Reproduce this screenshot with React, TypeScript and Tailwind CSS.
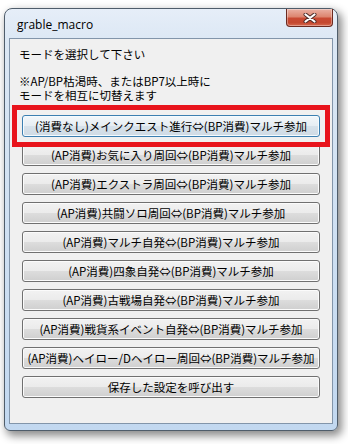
const modes = [
  "(AP消費)お気に入り周回⇔(BP消費)マルチ参加",
  "(AP消費)エクストラ周回⇔(BP消費)マルチ参加",
  "(AP消費)共闘ソロ周回⇔(BP消費)マルチ参加",
  "(AP消費)マルチ自発⇔(BP消費)マルチ参加",
  "(AP消費)四象自発⇔(BP消費)マルチ参加",
  "(AP消費)古戦場自発⇔(BP消費)マルチ参加",
  "(AP消費)戦貨系イベント自発⇔(BP消費)マルチ参加",
  "(AP消費)ヘイロー/Dヘイロー周回⇔(BP消費)マルチ参加",
  "保存した設定を呼び出す",
];

function CloseButton() {
  return (
    <button
      type="button"
      className="flex h-[18px] w-[47px] items-center justify-center rounded-b-[4px] border border-t-0 border-[#6b2a20] bg-[linear-gradient(to_bottom,#eab1a4_0%,#dd8670_45%,#c94a33_55%,#c4482f_80%,#d76a4f_100%)] shadow-[inset_0_0_0_1px_rgba(255,255,255,0.35)]"
    >
      <svg width="14" height="10" viewBox="0 0 14 10">
        <path d="M2.5 1.5 L11.5 8.5 M11.5 1.5 L2.5 8.5" stroke="#4b2a26" strokeWidth="4" strokeLinecap="round" />
        <path d="M2.5 1.5 L11.5 8.5 M11.5 1.5 L2.5 8.5" stroke="#ffffff" strokeWidth="2.2" strokeLinecap="round" />
      </svg>
    </button>
  );
}

function ModeButton({ label, primary }: { label: string; primary?: boolean }) {
  return (
    <button
      type="button"
      className={
        primary
          ? "h-[22px] w-full rounded-[3px] border border-[#3c7fb1] bg-[linear-gradient(to_bottom,#f3f7fa_0%,#e6edf3_50%,#d7e2eb_50%,#cfdae4_100%)] text-[11.5px] leading-[20px] text-black shadow-[inset_0_0_0_1px_#f4fbff]"
          : "h-[22px] w-full rounded-[3px] border border-[#707070] bg-[linear-gradient(to_bottom,#f2f2f2_0%,#ebebeb_50%,#dddddd_50%,#cfcfcf_100%)] text-[11.5px] leading-[20px] text-black shadow-[inset_0_0_0_1px_#fbfbfb]"
      }
    >
      {label}
    </button>
  );
}

export default function App() {
  return (
    <div className="h-[444px] w-[348px] overflow-hidden bg-white pl-[4px] pt-[8px]">
      <div className="flex h-[423px] w-[334px] flex-col rounded-t-[8px] rounded-b-[6px] border border-[#4f5d6b] bg-[linear-gradient(to_bottom,#e6eef8_0%,#dbe7f4_8%,#cddff2_60%,#c2d8f0_100%)] px-[4px] pb-[6px] shadow-[3px_4px_9px_1px_rgba(0,0,0,0.45)]">
        <div className="flex h-[29px] shrink-0 items-start justify-between">
          <span className="pl-[8px] pt-[8px] font-['Open_Sans',sans-serif] text-[12px] leading-[16px] text-black">
            grable_macro
          </span>
          <CloseButton />
        </div>
        <div className="flex flex-1 flex-col border border-[#8295aa] bg-[#f0f0f0] font-['Noto_Sans_CJK_JP',sans-serif] text-[11.5px] text-black">
          <p className="pl-[9px] pt-[8px] leading-[14px]">モードを選択して下さい</p>
          <p className="mt-[13px] pl-[9px] leading-[14px]">
            ※AP/BP枯渇時、またはBP7以上時に
            <br />
            モードを相互に切替えます
          </p>
          <div className="mt-[13px] flex flex-col gap-[7px] px-[12px]">
            <div className="relative">
              <ModeButton label="(消費なし)メインクエスト進行⇔(BP消費)マルチ参加" primary />
              <div className="pointer-events-none absolute -inset-[10px] border-[5px] border-[#e8141c]" />
            </div>
            {modes.map((m) => (
              <ModeButton key={m} label={m} />
            ))}
          </div>
        </div>
      </div>
    </div>
  );
}
